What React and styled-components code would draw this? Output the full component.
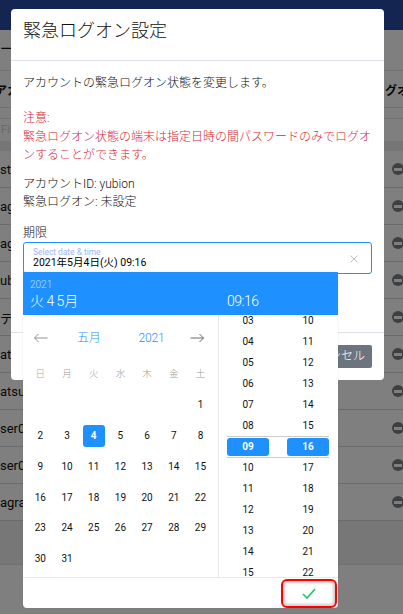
import React from 'react';
import styled, { createGlobalStyle } from 'styled-components';

const Global = createGlobalStyle`
  html, body { margin: 0; padding: 0; height: 100%; overflow: hidden; background: #fff; }
  #root { height: 100%; }
  * { box-sizing: border-box; }
  body { font-family: Roboto, "Noto Sans CJK JP", sans-serif; font-weight: 300; color: #111; }
`;

const Page = styled.div`
  position: relative;
  width: 403px;
  height: 614px;
  overflow: hidden;
  background: #fff;
`;
const TopBar = styled.header`
  height: 30px;
  background: #264aa0;
`;
const Crumb = styled.div`
  height: 41px;
  padding: 9px 0 0 0;
  font-size: 13px;
  font-weight: 400;
  line-height: 20px;
  border-bottom: 1px solid #dee2e6;
  white-space: nowrap;
`;
const HeadRow = styled.div`
  height: 37px;
  display: flex;
  justify-content: space-between;
  align-items: center;
  font-size: 12px;
  font-weight: 700;
  border-bottom: 1px solid #dee2e6;
  white-space: nowrap;
  overflow: hidden;
`;
const HeadLead = styled.span`
  margin-left: -5px;
`;
const HeadTail = styled.span`
  margin-right: -18px;
`;
const FilterRow = styled.div`
  height: 33px;
  padding-top: 10px;
  background: #fff;
`;
const FilterInput = styled.div`
  height: 23px;
  border-top: 1px solid #dee2e6;
  padding: 3px 0 0 1px;
  font-size: 11px;
  line-height: 16px;
  color: #bbb;
`;
const FilterGap = styled.div`
  height: 10px;
  background: #ececec;
`;
const Row = styled.div`
  height: 37px;
  display: flex;
  justify-content: space-between;
  align-items: center;
  font-size: 13px;
  font-weight: 400;
  border-bottom: 1px solid #d4d6d8;
  white-space: nowrap;
  overflow: hidden;
`;
const RowName = styled.span`
  display: block;
  width: 27px;
  overflow: hidden;
`;
const Minus = styled.span`
  position: relative;
  width: 12px;
  height: 12px;
  margin-right: -1px;
  border-radius: 50%;
  background: #7b8187;
  &::after {
    content: '';
    position: absolute;
    left: 2px;
    right: 2px;
    top: 4.5px;
    height: 3px;
    background: #fff;
  }
`;
const TableFoot = styled.div`
  height: 44px;
  background: #efefef;
  border-bottom: 1px solid #dee2e6;
`;
const Backdrop = styled.div`
  position: absolute;
  inset: 0;
  background: rgba(0, 0, 0, 0.5);
`;
const Modal = styled.section`
  position: absolute;
  left: 11px;
  top: 9px;
  width: 373px;
  height: 371px;
  background: #fff;
  border-radius: 4px;
  display: flex;
  flex-direction: column;
`;
const ModalHeader = styled.div`
  height: 52px;
  padding: 7px 12px 0;
  border-bottom: 1px solid #dee2e6;
`;
const ModalTitle = styled.h5`
  margin: 0;
  font-size: 18px;
  font-weight: 300;
  line-height: 30px;
`;
const ModalBody = styled.div`
  flex: 1;
  padding: 13px 12px 0;
  font-size: 12px;
  line-height: 18.3px;
`;
const Para = styled.p`
  margin: 0 0 ${p => p.$gap}px;
  color: ${p => (p.$danger ? '#d81f35' : 'inherit')};
`;
const FieldLabel = styled.div`
  font-size: 12px;
  line-height: 18px;
`;
const Field = styled.div`
  position: relative;
  height: 32px;
  width: 349px;
  border: 1px solid #1e90ff;
  border-radius: 3px;
  padding: 5px 9px 0;
`;
const FloatLabel = styled.div`
  font-size: 8.4px;
  font-weight: 400;
  line-height: 9px;
  color: #9db4ff;
  white-space: nowrap;
`;
const FieldValue = styled.div`
  font-size: 10.5px;
  font-weight: 400;
  line-height: 12px;
  color: #000;
  white-space: nowrap;
`;
const Clear = styled.svg`
  position: absolute;
  right: 13px;
  top: 12px;
  width: 8px;
  height: 8px;
`;
const ModalFooter = styled.div`
  height: 48px;
  border-top: 1px solid #dee2e6;
  display: flex;
  justify-content: flex-end;
  align-items: flex-start;
  padding: 12px 12px 0;
`;
const CancelBtn = styled.button`
  width: 74px;
  height: 23px;
  border: 0;
  border-radius: 2px;
  background: #6c757d;
  color: #fff;
  font-family: Roboto, "Noto Sans CJK JP", sans-serif;
  font-size: 12px;
  font-weight: 300;
  line-height: 23px;
  padding: 0;
`;
const Picker = styled.div`
  position: absolute;
  left: 23px;
  top: 272px;
  width: 315px;
  height: 336px;
  background: #fff;
  border-radius: 0 0 4px 4px;
  box-shadow: 0 0 2px rgba(0, 0, 0, 0.1);
  display: flex;
  flex-direction: column;
  overflow: hidden;
`;
const PickerHead = styled.div`
  height: 43px;
  flex: none;
  background: #1e90ff;
  color: #fff;
  padding: 5px 7px 0;
  display: grid;
  grid-template-columns: 197px 1fr;
  grid-template-rows: 15px 18px;
`;
const HeadYear = styled.div`
  grid-column: 1 / 3;
  font-size: 10px;
  line-height: 15px;
  opacity: 0.7;
`;
const HeadDate = styled.div`
  font-size: 14px;
  line-height: 18px;
  word-spacing: -1px;
`;
const HeadTime = styled.div`
  font-size: 14px;
  line-height: 18px;
  letter-spacing: -0.5px;
`;
const PickerBody = styled.div`
  flex: 1;
  min-height: 0;
  display: flex;
`;
const CalendarPane = styled.div`
  width: 196px;
  flex: none;
  border-right: 1px solid #e8e8e8;
  padding: 0 0 0 4px;
`;
const MonthNav = styled.div`
  height: 46px;
  display: flex;
  align-items: center;
`;
const Arrow = styled.svg`
  flex: none;
  width: 14px;
  height: 10px;
  margin-left: ${p => p.$ml}px;
`;
const NavLabel = styled.span`
  color: #1e90ff;
  font-size: 12px;
  line-height: 16px;
  letter-spacing: -0.2px;
  margin-left: ${p => p.$ml}px;
`;
const Weeks = styled.div`
  display: grid;
  grid-template-columns: repeat(7, 26.7px);
`;
const WeekDay = styled.div`
  height: 28.5px;
  padding-top: 7px;
  text-align: center;
  font-size: 9.5px;
  line-height: 12px;
  color: ${p => p.$c || '#999'};
`;
const Day = styled.div`
  height: 30.75px;
  display: flex;
  align-items: center;
  justify-content: center;
  font-size: 10px;
  font-weight: 400;
`;
const DayMark = styled.span`
  width: 22px;
  height: 22px;
  border-radius: 3px;
  display: flex;
  align-items: center;
  justify-content: center;
  background: #1e90ff;
  color: #fff;
  font-weight: 700;
`;
const TimePane = styled.div`
  position: relative;
  flex: 1;
  display: grid;
  grid-template-columns: 42px 42px;
  column-gap: 18px;
  padding: 0 9px 0 8px;
  overflow: hidden;
`;
const TimeCol = styled.div`
  margin-top: -5px;
  display: flex;
  flex-direction: column;
`;
const TimeCell = styled.div`
  height: 21px;
  flex: none;
  text-align: center;
  font-size: 10px;
  font-weight: 400;
  line-height: 21px;
  ${p => p.$on && `
    height: 18px;
    margin: 1.5px 0;
    line-height: 18px;
    background: #1e90ff;
    color: #fff;
    font-weight: 700;
    border-radius: 3px;
  `}
`;
const SelectBand = styled.div`
  position: absolute;
  left: 8px;
  right: 9px;
  top: 121px;
  height: 22px;
  border-top: 1px solid #ccc;
  border-bottom: 1px solid #ccc;
`;
const PickerFoot = styled.div`
  height: 31px;
  flex: none;
  border-top: 1px solid #e8e8e8;
  display: flex;
  justify-content: flex-end;
  align-items: center;
  padding-right: 1px;
`;
const OkBtn = styled.button`
  width: 56px;
  height: 29px;
  background: #fff;
  border: 2px solid #f00;
  border-radius: 6px;
  box-shadow: inset 0 0 3px 2px #ccc;
  padding: 0;
  display: flex;
  align-items: center;
  justify-content: center;
`;

const names = ['st', 'agr', 'agr', 'ubi', 'テス', 'at', 'atsu', 'ser00', 'ser00', 'agran'];
const days = [...Array(6).fill(''), ...Array.from({ length: 31 }, (_, i) => i + 1)];
const week = [['日', '#c9a08a'], ['月', '#a89a90'], ['火', '#b59a90'], ['水', '#8fa5b5'], ['木', '#a89a8a'], ['金', '#a8a090'], ['土', '#999']];
const hours = ['03', '04', '05', '06', '07', '08', '09', '10', '11', '12', '13', '14', '15'];
const mins = ['10', '11', '12', '13', '14', '15', '16', '17', '18', '19', '20', '21', '22'];

export default function App() {
  return (
    <Page>
      <Global />
      <TopBar />
      <Crumb>ー</Crumb>
      <HeadRow><HeadLead>アカ</HeadLead><HeadTail>グオン</HeadTail></HeadRow>
      <FilterRow><FilterInput>Fil</FilterInput></FilterRow>
      <FilterGap />
      {names.map((n, i) => (
        <Row key={i}><RowName>{n}</RowName><Minus /></Row>
      ))}
      <TableFoot />
      <Backdrop />
      <Modal>
        <ModalHeader><ModalTitle>緊急ログオン設定</ModalTitle></ModalHeader>
        <ModalBody>
          <Para $gap={17}>アカウントの緊急ログオン状態を変更します。</Para>
          <Para $gap={11} $danger>注意:<br />緊急ログオン状態の端末は指定日時の間パスワードのみでログオンすることができます。</Para>
          <Para $gap={12}>アカウントID: yubion<br />緊急ログオン: 未設定</Para>
          <FieldLabel>期限</FieldLabel>
          <Field>
            <FloatLabel>Select date &amp; time</FloatLabel>
            <FieldValue>2021年5月4日(火) 09:16</FieldValue>
            <Clear viewBox="0 0 8 8"><path d="M0.5 0.5 L7.5 7.5 M7.5 0.5 L0.5 7.5" stroke="#b9b9b9" strokeWidth="0.9" /></Clear>
          </Field>
        </ModalBody>
        <ModalFooter><CancelBtn>キャンセル</CancelBtn></ModalFooter>
      </Modal>
      <Picker>
        <PickerHead>
          <HeadYear>2021</HeadYear>
          <HeadDate>火 4 5月</HeadDate>
          <HeadTime>09:16</HeadTime>
        </PickerHead>
        <PickerBody>
          <CalendarPane>
            <MonthNav>
              <Arrow $ml={7} viewBox="0 0 14 10"><path d="M0.5 5 H13.5 M4.5 1 L0.5 5 L4.5 9" fill="none" stroke="#777" strokeWidth="0.8" /></Arrow>
              <NavLabel $ml={29}>五月</NavLabel>
              <NavLabel $ml={38}>2021</NavLabel>
              <Arrow $ml={26} viewBox="0 0 14 10"><path d="M0.5 5 H13.5 M9.5 1 L13.5 5 L9.5 9" fill="none" stroke="#444" strokeWidth="0.8" /></Arrow>
            </MonthNav>
            <Weeks>
              {week.map(([d, c]) => <WeekDay key={d} $c={c}>{d}</WeekDay>)}
              {days.map((d, i) => <Day key={i}>{d === 4 ? <DayMark>4</DayMark> : d}</Day>)}
            </Weeks>
          </CalendarPane>
          <TimePane>
            <SelectBand />
            <TimeCol>{hours.map(h => <TimeCell key={h} $on={h === '09'}>{h}</TimeCell>)}</TimeCol>
            <TimeCol>{mins.map(m => <TimeCell key={m} $on={m === '16'}>{m}</TimeCell>)}</TimeCol>
          </TimePane>
        </PickerBody>
        <PickerFoot>
          <OkBtn aria-label="OK">
            <svg width="14" height="11" viewBox="0 0 14 11"><path d="M1 6 L5 10 L13 1" fill="none" stroke="#22c55e" strokeWidth="1.6" /></svg>
          </OkBtn>
        </PickerFoot>
      </Picker>
    </Page>
  );
}
